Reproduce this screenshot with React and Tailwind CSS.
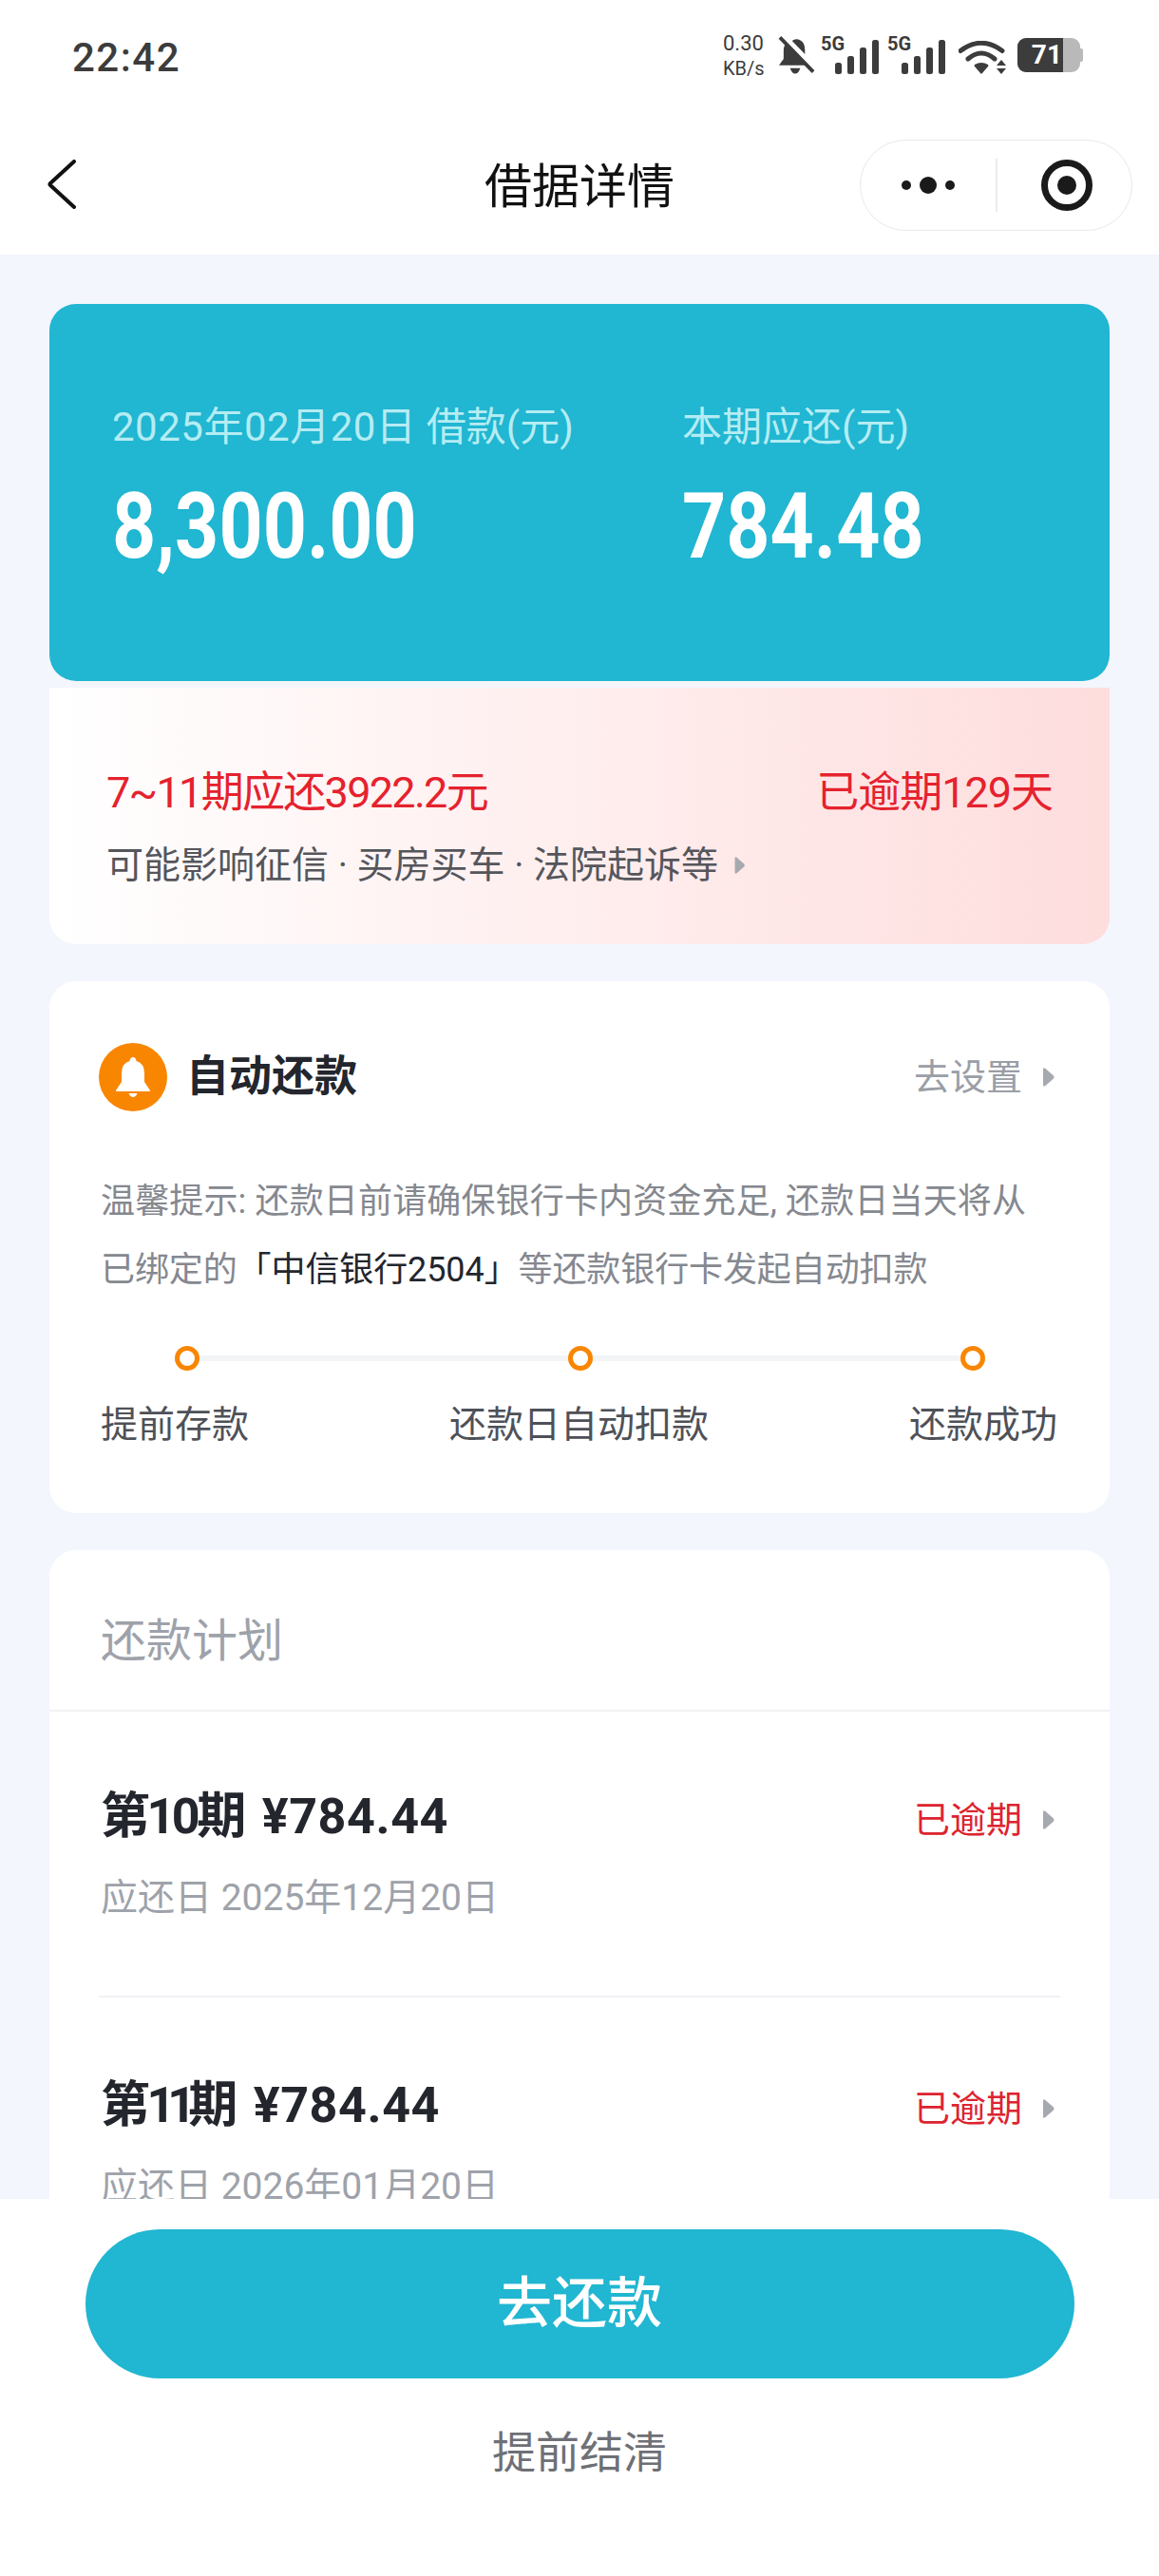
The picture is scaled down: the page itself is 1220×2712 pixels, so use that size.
const Caret = ({ className = "" }) => (
  <svg viewBox="0 0 13 22" className={`w-[13px] h-[22px] shrink-0 ${className}`}>
    <path d="M1 3 Q1 0 3.5 2 L12 9.5 Q13 11 12 12.5 L3.5 20 Q1 22 1 19 Z" fill="#a6a9b0" />
  </svg>
);

const Signal = () => (
  <svg viewBox="0 0 61 40" className="w-[61px] h-[40px]">
    <text x="0" y="15" fontSize="20" fontWeight="700" fill="#3c3c3c" fontFamily="Roboto, sans-serif">5G</text>
    <rect x="15" y="28" width="7" height="12" rx="2.5" fill="#3c3c3c" />
    <rect x="28" y="21" width="7" height="19" rx="2.5" fill="#3c3c3c" />
    <rect x="41" y="12" width="7" height="28" rx="2.5" fill="#3c3c3c" />
    <rect x="54" y="4" width="7" height="36" rx="2.5" fill="#3c3c3c" />
  </svg>
);

const StatusBar = () => (
  <div className="h-[120px] flex items-start justify-between pl-[76px] pr-[80px] bg-white">
    <div className="mt-[39px] h-[44px] leading-[44px] text-[42px] font-medium tracking-[1.5px] text-[#3c3c3c]">22:42</div>
    <div className="mt-[38px] h-[40px] flex items-start">
      <div className="w-[44px] -ml-[2px] mr-[2px] -mt-[5px] text-[22px] leading-[26px] text-[#3c3c3c] flex flex-col">
        <span>0.30</span>
        <span className="text-[20px] leading-[26px]">KB/s</span>
      </div>
      <svg viewBox="0 0 40 40" className="w-[39px] h-[40px] ml-[12px]">
        <path d="M14 6 Q17 2 22 3 Q29 5 29 14 L29 24 L33 31 L1 31 L6 24 L6 15 Q6 10 9 7 Z" fill="#3c3c3c" />
        <path d="M13 34 L24 34 Q22 40 18.5 40 Q15 40 13 34 Z" fill="#3c3c3c" />
        <path d="M4 -1 L40 36" stroke="#fff" strokeWidth="8" />
        <path d="M2 1 L38 38" stroke="#3c3c3c" strokeWidth="4" />
      </svg>
      <div className="ml-[6px]"><Signal /></div>
      <div className="ml-[9px]"><Signal /></div>
      <svg viewBox="0 0 50 35" className="w-[50px] h-[35px] ml-[14px] mt-[5px]">
        <path d="M2 10.5 Q24 -6 46 10.5" fill="none" stroke="#3c3c3c" strokeWidth="5" strokeLinecap="round" />
        <path d="M10 19 Q24 7 38 19" fill="none" stroke="#3c3c3c" strokeWidth="5" strokeLinecap="round" />
        <path d="M17 25 Q24 21 31 25 Q32 26 31 27 L25 34 Q24 35 23 34 L17 27 Q16 26 17 25 Z" fill="#3c3c3c" />
        <path d="M45 20 L50 26 L40 26 Z" fill="#3c3c3c" />
        <path d="M40 29 L50 29 L45 35 Z" fill="#3c3c3c" />
      </svg>
      <div className="ml-[12px] mt-[2px] h-[36px] flex items-center">
        <div className="w-[66px] h-[36px] rounded-[9px] overflow-hidden flex bg-[#b9b9b9]">
          <div className="w-[48px] h-full bg-[#3c3c3c] text-white text-[28px] leading-[36px] font-bold text-right pr-[1px]">71</div>
        </div>
        <div className="w-[3px] h-[14px] rounded-r-[2px] bg-[#b9b9b9]" />
      </div>
    </div>
  </div>
);

const NavBar = () => (
  <div className="h-[148px] bg-white flex items-start pl-[50px] pr-[28px]">
    <div className="flex-1">
      <svg viewBox="0 0 30 52" className="w-[30px] h-[52px] mt-[48px]">
        <path d="M28 2 L3 25 Q2 26 3 27 L28 50" fill="none" stroke="#111" strokeWidth="4" strokeLinecap="round" />
      </svg>
    </div>
    <div className="mt-[49px] w-[200px] h-[56px] leading-[56px] text-[50px] text-[#111] text-center whitespace-nowrap mr-[195px]">借据详情</div>
    <div className="mt-[27px] w-[287px] h-[96px] rounded-full border-[1.5px] border-[#e9e9e9] flex items-center">
      <div className="w-[142px] flex items-center justify-center gap-[9px]">
        <span className="w-[10px] h-[10px] rounded-full bg-[#1a1a1a]" />
        <span className="w-[18px] h-[18px] rounded-full bg-[#1a1a1a]" />
        <span className="w-[10px] h-[10px] rounded-full bg-[#1a1a1a]" />
      </div>
      <div className="w-[1.5px] h-[56px] bg-[#ececec]" />
      <div className="flex-1 flex items-center justify-center pl-[6px]">
        <div className="w-[54px] h-[54px] rounded-full border-[7px] border-[#1a1a1a] flex items-center justify-center">
          <span className="w-[20px] h-[20px] rounded-full bg-[#1a1a1a]" />
        </div>
      </div>
    </div>
  </div>
);

const HeroNumber = ({ children }) => (
  <div className="mt-[34px] h-[100px] leading-[100px] text-[96px] font-bold text-white origin-left scale-x-[0.84] whitespace-nowrap">{children}</div>
);

const Hero = () => (
  <div className="h-[397px] rounded-[28px] bg-[#21b6d1] pl-[66px] pt-[110px] flex">
    <div className="w-[600px]">
      <div className="h-[40px] leading-[40px] text-[42px] text-[#b4ecf3] whitespace-nowrap">
        <span className="tracking-[0.5px]">2025年02月20日</span> 借款(元)
      </div>
      <HeroNumber>8,300.00</HeroNumber>
    </div>
    <div>
      <div className="h-[40px] leading-[40px] text-[42px] text-[#b4ecf3] whitespace-nowrap">本期应还(元)</div>
      <HeroNumber>784.48</HeroNumber>
    </div>
  </div>
);

const Overdue = () => (
  <div className="mt-[7px] h-[270px] rounded-b-[28px] bg-gradient-to-r from-white to-[#fedddd] pl-[60px] pr-[60px] pt-[86px]">
    <div className="h-[50px] leading-[50px] flex justify-between text-[45px] text-[#e5222e]">
      <span className="tracking-[-1.7px]">7~11期应还3922.2元</span>
      <span className="tracking-[-1px]">已逾期129天</span>
    </div>
    <div className="mt-[31px] h-[40px] leading-[40px] flex items-center text-[39px] text-[#55565c] whitespace-nowrap">
      <span>可能影响征信 · 买房买车 · 法院起诉等</span>
      <Caret className="ml-[16px] scale-90" />
    </div>
  </div>
);

const Ring = () => (
  <span className="w-[26px] h-[26px] rounded-full border-[5px] border-[#f98600] bg-white" />
);

const AutoPay = () => (
  <div className="mt-[39px] h-[560px] rounded-[28px] bg-white pl-[54px] pr-[58px] pt-[65px]">
    <div className="h-[72px] flex items-center -ml-[2px]">
      <div className="w-[72px] h-[72px] rounded-full bg-[#f98600] flex items-center justify-center">
        <svg viewBox="0 0 38 42" className="w-[38px] h-[42px]">
          <path d="M19 0 Q22 0 22.5 4 Q31 6.5 31 17 L31 26 L37 35 Q37.5 36 36 36 L2 36 Q0.5 36 1 35 L7 26 L7 17 Q7 6.5 15.5 4 Q16 0 19 0 Z" fill="#fff" />
          <path d="M14.5 38 L23.5 38 Q22 42 19 42 Q16 42 14.5 38 Z" fill="#fff" />
        </svg>
      </div>
      <span className="ml-[20px] text-[45px] font-bold text-[#23262d]">自动还款</span>
      <span className="ml-auto text-[38px] text-[#9a9ea6]">去设置</span>
      <Caret className="ml-[21px]" />
    </div>
    <div className="mt-[59px] text-[36px] leading-[72px] text-[#85888f] whitespace-nowrap">
      <div className="tracking-[0.15px]">温馨提示: 还款日前请确保银行卡内资金充足, 还款日当天将从</div>
      <div className="tracking-[-0.1px]">已绑定的<span className="text-[#23262d]">「中信银行2504」</span>等还款银行卡发起自动扣款</div>
    </div>
    <div className="mt-[44px] ml-[78px] mr-[73px] flex items-center">
      <Ring />
      <span className="flex-1 h-[6px] bg-[#f3f4f6]" />
      <Ring />
      <span className="flex-1 h-[6px] bg-[#f3f4f6]" />
      <Ring />
    </div>
    <div className="mt-[37px] -mr-[3px] h-[40px] leading-[40px] flex justify-between text-[39px] text-[#4e5158]">
      <span>提前存款</span>
      <span>还款日自动扣款</span>
      <span>还款成功</span>
    </div>
  </div>
);

const PlanRow = ({ period, amount, date, first }) => (
  <div className={first ? "px-[2px] pt-[81px] pb-[83px] border-b-2 border-[#f1f2f5]" : "px-[2px] pt-[84px] pb-[60px]"}>
    <div className="h-[60px] flex items-center">
      <span className="text-[52px] leading-[60px] font-bold text-[#23262d] tracking-[-3.5px]">{period}</span>
      <span className="ml-[20px] text-[52px] leading-[60px] font-bold text-[#23262d] tracking-[0.6px]">{amount}</span>
      <span className="ml-auto mr-[5px] mt-[6px] text-[38px] text-[#dd2430]">已逾期</span>
      <Caret className="ml-[16px] mr-[4px] mt-[6px]" />
    </div>
    <div className="mt-[35px] h-[40px] leading-[40px] text-[39px] text-[#9ea2aa]">{date}</div>
  </div>
);

const Plan = () => (
  <div className="mt-[39px] rounded-t-[28px] bg-white">
    <div className="h-[144px] pt-[24px] box-content border-b-2 border-[#f1f2f5] pl-[54px] flex items-center text-[48px] text-[#9ea2aa]">还款计划</div>
    <div className="mx-[52px]">
      <PlanRow first period="第10期" amount="¥784.44" date="应还日 2025年12月20日" />
      <PlanRow period={<>第<span className="tracking-[-8px]">11</span><span>期</span></>} amount="¥784.44" date="应还日 2026年01月20日" />
    </div>
  </div>
);

const Footer = () => (
  <div className="h-[397px] shrink-0 bg-white pt-[32px]">
    <div className="mx-auto w-[1041px] h-[157px] rounded-full bg-[#21b6d1] flex items-center justify-center text-[58px] font-medium text-white">去还款</div>
    <div className="mt-[53px] h-[50px] leading-[50px] text-center text-[46px] text-[#6e7076]">提前结清</div>
  </div>
);

export default function App() {
  return (
    <div className="w-[1220px] h-[2712px] flex flex-col overflow-hidden bg-white font-['Roboto','Noto_Sans_CJK_SC',sans-serif]">
      <StatusBar />
      <NavBar />
      <div className="flex-1 min-h-0 overflow-hidden bg-[#f3f6fd] px-[52px] pt-[52px]">
        <Hero />
        <Overdue />
        <AutoPay />
        <Plan />
      </div>
      <Footer />
    </div>
  );
}
